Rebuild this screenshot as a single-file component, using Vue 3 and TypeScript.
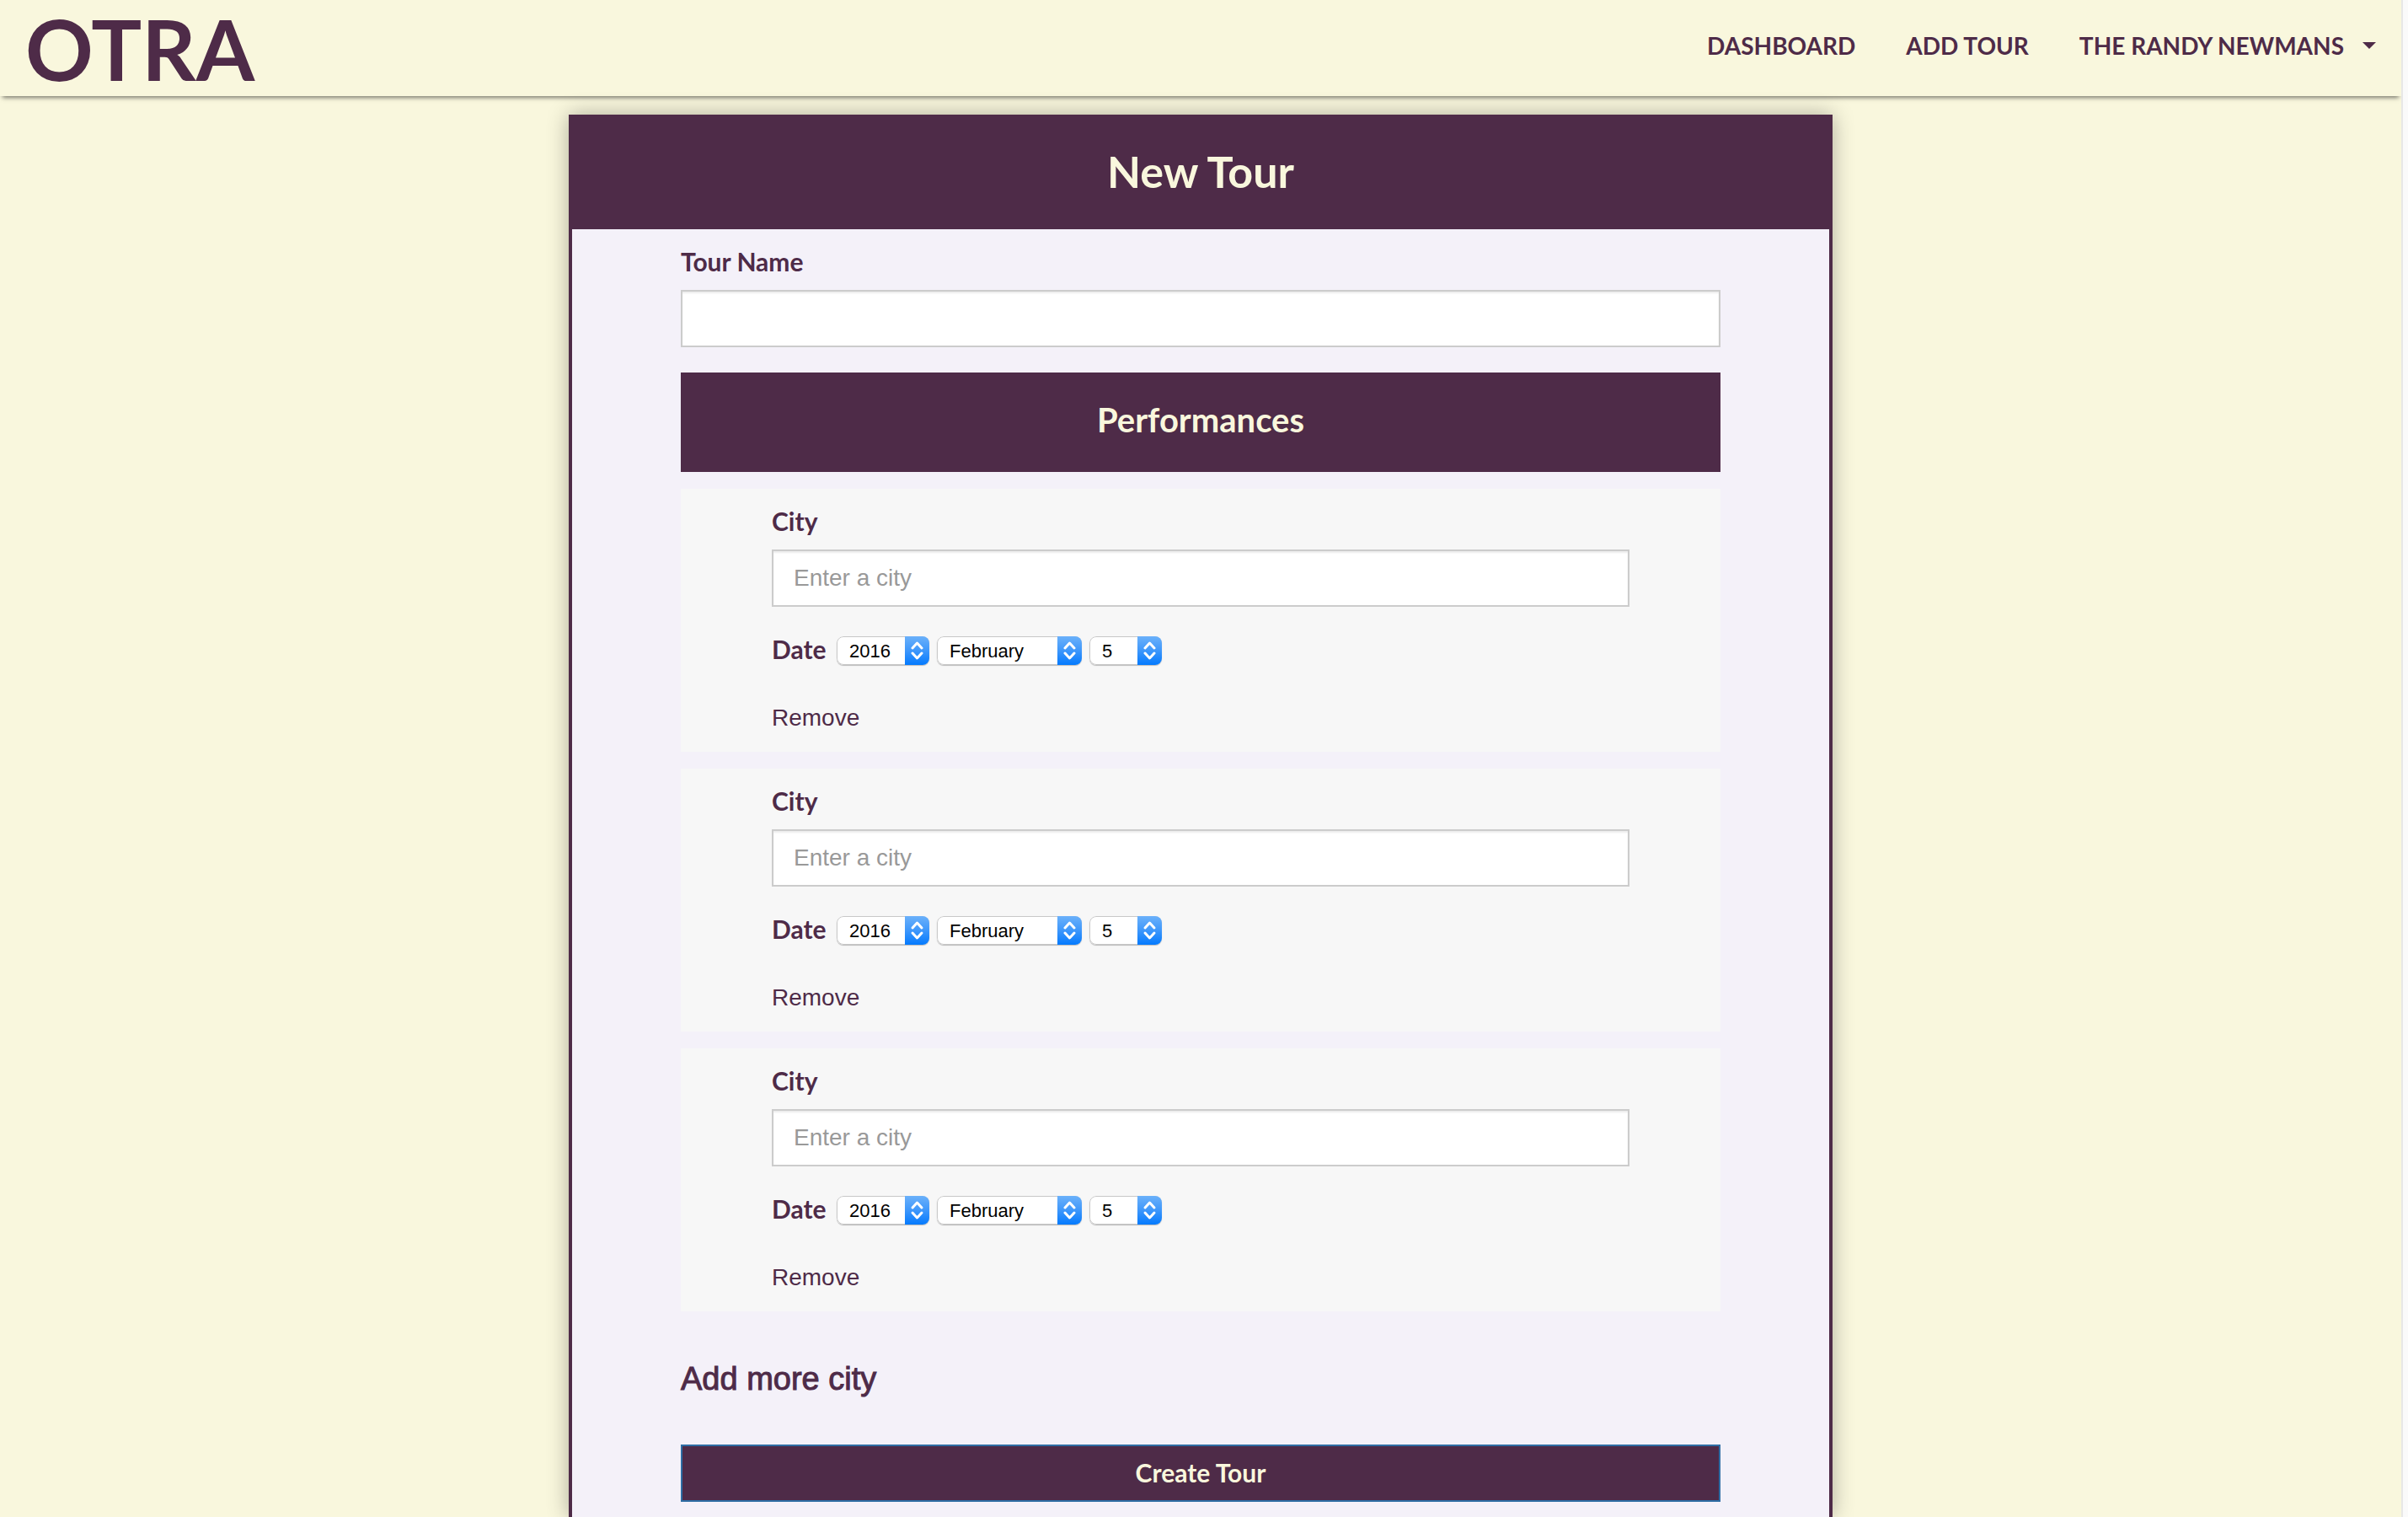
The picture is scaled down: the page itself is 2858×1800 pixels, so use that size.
<script setup lang="ts">
import { reactive, ref } from 'vue'

interface Performance {
  id: number
  city: string
  year: number
  month: string
  day: number
}

const years: number[] = [2015, 2016, 2017, 2018]
const months: string[] = [
  'January', 'February', 'March', 'April', 'May', 'June',
  'July', 'August', 'September', 'October', 'November', 'December',
]
const days: number[] = Array.from({ length: 31 }, (_, i) => i + 1)

let nextId = 1
const blank = (): Performance => ({ id: nextId++, city: '', year: 2016, month: 'February', day: 5 })

const tourName = ref('')
const performances = reactive<Performance[]>([blank(), blank(), blank()])

function addCity(): void {
  performances.push(blank())
}

function removeCity(id: number): void {
  const index = performances.findIndex((p) => p.id === id)
  if (index >= 0) performances.splice(index, 1)
}
</script>

<template>
  <div class="page">
    <div class="view">
      <header class="navbar">
        <a class="brand" href="#">OTRA</a>
        <nav class="links">
          <a href="#">DASHBOARD</a>
          <a href="#">ADD TOUR</a>
          <a href="#" class="account">THE RANDY NEWMANS <span class="caret"></span></a>
        </nav>
      </header>

      <main class="card">
        <h1 class="card-title">New Tour</h1>
        <form class="form" @submit.prevent>
          <label class="label" for="tour-name">Tour Name</label>
          <input id="tour-name" v-model="tourName" class="field" type="text" />

          <h2 class="section-title">Performances</h2>

          <section v-for="p in performances" :key="p.id" class="performance">
            <label class="label" :for="`city-${p.id}`">City</label>
            <input :id="`city-${p.id}`" v-model="p.city" class="field" type="text" placeholder="Enter a city" />
            <div class="date">
              <label class="label date-label" :for="`year-${p.id}`">Date</label>
              <span class="picker year">
                <select :id="`year-${p.id}`" v-model="p.year">
                  <option v-for="y in years" :key="y" :value="y">{{ y }}</option>
                </select>
                <svg viewBox="0 0 29 34" aria-hidden="true"><path d="M9 14L14.500 8L20 14M9 20L14.500 26L20 20" /></svg>
              </span>
              <span class="picker month">
                <select v-model="p.month" aria-label="Month">
                  <option v-for="m in months" :key="m" :value="m">{{ m }}</option>
                </select>
                <svg viewBox="0 0 29 34" aria-hidden="true"><path d="M9 14L14.500 8L20 14M9 20L14.500 26L20 20" /></svg>
              </span>
              <span class="picker day">
                <select v-model="p.day" aria-label="Day">
                  <option v-for="d in days" :key="d" :value="d">{{ d }}</option>
                </select>
                <svg viewBox="0 0 29 34" aria-hidden="true"><path d="M9 14L14.500 8L20 14M9 20L14.500 26L20 20" /></svg>
              </span>
            </div>
            <a class="remove" href="#" @click.prevent="removeCity(p.id)">Remove</a>
          </section>

          <a class="add" href="#" @click.prevent="addCity">Add more city</a>
          <button class="submit" type="submit">Create Tour</button>
        </form>
      </main>
    </div>
    <div class="gutter"></div>
  </div>
</template>

<style>
body {
  margin: 0;
  background: #f9f7dd;
}
</style>

<style scoped>
* {
  box-sizing: border-box;
}

.page {
  display: flex;
  min-height: 100vh;
  font-family: "Liberation Sans", Arial, sans-serif;
  font-size: 28px;
  line-height: 40px;
  color: #4e2b48;
}

.view {
  flex: 1;
  display: flex;
  flex-direction: column;
  align-items: center;
}

.gutter {
  width: 8px;
  background: #fafafa;
  border-left: 2px solid #e7e7e7;
}

a {
  color: inherit;
  text-decoration: none;
}

.navbar {
  align-self: stretch;
  display: flex;
  justify-content: space-between;
  align-items: flex-start;
  height: 114px;
  padding: 0 30px;
  box-shadow: 0 5px 5px -3px rgba(0, 0, 0, 0.5);
  font-family: Lato, sans-serif;
  font-weight: 700;
}

.brand {
  font-size: 100px;
  line-height: 114px;
}

.links {
  display: flex;
  gap: 60px;
  padding-top: 34px;
}

.account {
  display: flex;
  align-items: center;
  gap: 22px;
}

.caret {
  border: 8px solid transparent;
  border-top-color: currentColor;
  border-bottom: 0;
}

.card {
  flex: 1;
  width: 1500px;
  max-width: 100%;
  margin-top: 22px;
  border: 4px solid #4e2b48;
  border-bottom: 0;
  background: #f4f1f9;
  box-shadow: 0 0 24px rgba(0, 0, 0, 0.3);
}

.card-title,
.section-title {
  margin: 0;
  padding-bottom: 6px;
  background: #4e2b48;
  color: #f9f7dd;
  font-family: Lato, sans-serif;
  font-weight: 700;
  text-align: center;
}

.card-title {
  font-size: 52px;
  line-height: 126px;
}

.section-title {
  margin: 30px 0 20px;
  font-size: 40px;
  line-height: 112px;
}

.form {
  padding: 20px 129px 18px;
}

.label {
  display: block;
  margin-bottom: 16px;
  font-family: Lato, sans-serif;
  font-size: 30px;
  line-height: 36px;
  font-weight: 700;
}

.field {
  display: block;
  width: 100%;
  height: 68px;
  padding: 0 24px;
  border: 2px solid #ccc;
  border-radius: 0;
  background: #fff;
  box-shadow: inset 0 2px 2px rgba(0, 0, 0, 0.075);
  color: #555;
  font: inherit;
}

.field::placeholder {
  color: #999;
  opacity: 1;
}

.performance {
  margin-bottom: 20px;
  padding: 20px 108px;
  background: #f7f7f7;
}

.date {
  display: flex;
  align-items: center;
  gap: 9px;
  margin: 32px 0 40px;
}

.date-label {
  width: 68px;
  margin: 0;
  padding-bottom: 4px;
}

.picker {
  display: grid;
  position: relative;
  height: 34px;
  border-radius: 8px;
  overflow: hidden;
  box-shadow: 0 1px 1px rgba(0, 0, 0, 0.25);
}

.year {
  width: 110px;
}

.month {
  width: 172px;
}

.day {
  width: 86px;
}

.picker select {
  appearance: none;
  width: 100%;
  height: 34px;
  padding: 0 30px 0 14px;
  border: 1px solid #c8c8c8;
  border-radius: 8px;
  background: #fff;
  color: #000;
  font: 22px "Liberation Sans", Arial, sans-serif;
}

.picker svg {
  position: absolute;
  top: 0;
  right: 0;
  width: 29px;
  height: 34px;
  background: linear-gradient(#6bb1fa, #3e97fb 50%, #047afe);
  fill: none;
  stroke: #fff;
  stroke-width: 3;
  stroke-linecap: round;
  stroke-linejoin: round;
  pointer-events: none;
}

.remove {
  display: block;
  width: max-content;
}

.add {
  display: block;
  width: max-content;
  margin: 60px 0 58px;
  font-size: 38px;
  -webkit-text-stroke: 1px currentColor;
}

.submit {
  display: block;
  width: 100%;
  height: 68px;
  padding: 0 0 2px;
  border: 2px solid #2e6da4;
  background: #4e2b48;
  color: #f9f7dd;
  font-family: Lato, sans-serif;
  font-size: 30px;
  font-weight: 700;
}
</style>
